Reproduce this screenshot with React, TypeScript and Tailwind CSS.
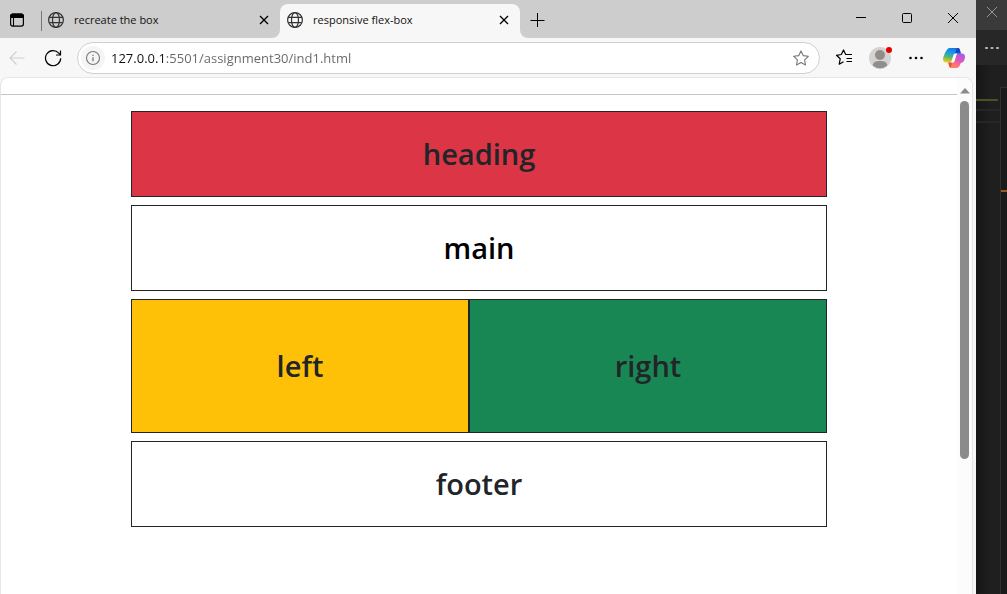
import type { ReactNode } from "react";

function Icon({ size = 16, className = "", children }: { size?: number; className?: string; children: ReactNode }) {
  return (
    <svg
      width={size}
      height={size}
      viewBox={`0 0 ${size} ${size}`}
      fill="none"
      stroke="currentColor"
      className={`shrink-0 ${className}`}
      aria-hidden="true"
    >
      {children}
    </svg>
  );
}

function Globe() {
  return (
    <Icon className="text-[#333333]">
      <circle cx="8" cy="8" r="7.4" strokeWidth="1.2" />
      <ellipse cx="8" cy="8" rx="3.5" ry="7.4" strokeWidth="1.2" />
      <path d="M1.3 5.3h13.4M1.3 10.7h13.4" strokeWidth="1.2" />
    </Icon>
  );
}

function TabFlare({ flipped = false }: { flipped?: boolean }) {
  return (
    <svg
      width="8"
      height="8"
      viewBox="0 0 8 8"
      className={`absolute bottom-0 text-[#f7f7f7] ${flipped ? "-right-2 -scale-x-100" : "-left-2"}`}
      aria-hidden="true"
    >
      <path d="M8 0v8H0a8 8 0 0 0 8-8z" fill="currentColor" />
    </svg>
  );
}

function Tab({ title, active = false }: { title: string; active?: boolean }) {
  return (
    <div
      className={`relative flex h-[34px] items-center pr-2 pb-[2px] pl-[7px] ${active ? "w-60 rounded-t-lg bg-[#f7f7f7]" : "w-[239px]"}`}
    >
      {active && <TabFlare />}
      {active && <TabFlare flipped />}
      <button type="button" className="flex min-w-0 grow items-center gap-[10px] text-left">
        <Globe />
        <span className="truncate text-[11px] text-[#111111]">{title}</span>
      </button>
      <button type="button" aria-label={`Close ${title}`} className="flex size-4 items-center justify-center text-black">
        <Icon size={10}>
          <path d="M1 1l8 8M9 1l-8 8" strokeWidth="1.3" />
        </Icon>
      </button>
    </div>
  );
}

function TabStrip() {
  return (
    <header className="flex h-[38px] items-end bg-[#cdcdcd] text-black">
      <button type="button" aria-label="Tab actions" className="flex h-[34px] w-[41px] items-center pb-[2px] pl-[9px]">
        <Icon>
          <rect x="1.6" y="2.1" width="12.8" height="12" rx="2" strokeWidth="1.2" />
          <path d="M1.6 5.5V4a2 2 0 0 1 2-2h8.8a2 2 0 0 1 2 2v1.5z" fill="currentColor" />
          <path d="M4.5 5v9" strokeWidth="1.1" />
        </Icon>
      </button>
      <div className="flex h-[34px] items-center">
        <span className="-mr-px h-5 w-px bg-[#777777]" />
      </div>
      <Tab title="recreate the box" />
      <Tab title="responsive flex-box" active />
      <button
        type="button"
        aria-label="New tab"
        className="flex h-[34px] w-[34px] items-center justify-center pb-[3px]"
      >
        <Icon>
          <path d="M8.5 1v14M1.5 8.5h14" />
        </Icon>
      </button>
      <div className="ml-auto flex h-9 self-start">
        <button type="button" aria-label="Minimize" className="flex w-[46px] items-center justify-center">
          <Icon size={12}>
            <path d="M1 5.5h10" />
          </Icon>
        </button>
        <button type="button" aria-label="Maximize" className="flex w-[46px] items-center justify-center">
          <Icon size={10}>
            <rect x="0.5" y="0.5" width="9" height="9" rx="1" />
          </Icon>
        </button>
        <button type="button" aria-label="Close" className="flex w-[46px] items-center justify-center">
          <Icon size={12}>
            <path d="M1 1l10 10M11 1L1 11" />
          </Icon>
        </button>
      </div>
    </header>
  );
}

function Copilot() {
  return (
    <svg width="22" height="20" viewBox="0 0 22 20" aria-hidden="true">
      <defs>
        <linearGradient id="blue" x1="0.6" y1="0" x2="0.4" y2="1">
          <stop offset="0" stopColor="#1674e0" />
          <stop offset="0.35" stopColor="#189cea" />
          <stop offset="0.65" stopColor="#56b86a" />
          <stop offset="1" stopColor="#f3c91c" />
        </linearGradient>
        <linearGradient id="pink" x1="0.8" y1="0" x2="0.3" y2="1">
          <stop offset="0" stopColor="#a35af0" />
          <stop offset="0.45" stopColor="#dd58b8" />
          <stop offset="0.75" stopColor="#fa7184" />
          <stop offset="1" stopColor="#fb8a45" />
        </linearGradient>
      </defs>
      <path
        d="M14 5.5h5c2 0 3 1.300 3 3.200 0 2-1.100 6.300-4.200 6.300l-1 2.200c-.7 1.700-1.600 2.800-3.400 2.800H8.600c-1.500 0-2.100-1.300-2.500-2.800L5.300 14.500h3.500c1.500 0 2.200-.8 2.700-2.300l1.300-4.600c.3-1.200.6-1.800 1.200-2.100z"
        fill="url(#pink)"
      />
      <path
        d="M8 14.500H3C1 14.500 0 13.200 0 11.300 0 9.500 1.200 6.500 2.200 4.500L4 1.800C4.800.6 5.600 0 7 0h7.500c1.500 0 2.200 1.300 2.500 2.800l.8 2.700h-4.300c-1.400 0-2 .8-2.400 2.200L9.600 12.500c-.4 1.300-.8 1.900-1.600 2z"
        fill="url(#blue)"
      />
      <path d="M12 5.800C13 2.500 13.200 0 15 0c1.400 0 1.900 1.400 2.200 2.800l.7 2.700h-4.200z" fill="#1748c2" />
      <path d="M9.300 13.500C8.600 16.500 8.200 20 7.200 19.800c-.8-.5-1.200-2.200-1.500-3.400l-.5-1.900H8z" fill="#ee5135" />
      <path
        d="M14.300 5.600h-1.600c-1.500 0-2.100.9-2.500 2.100L8.700 12.500c-.3 1-.6 1.700-1.300 2h1.700c1.600 0 2.300-.8 2.700-2.100l1.500-4.900c.3-1 .5-1.600 1-1.900z"
        fill="#ffffff"
      />
    </svg>
  );
}

function Toolbar() {
  return (
    <nav className="flex h-10 items-center bg-[#f7f7f7] text-black" aria-label="Browser toolbar">
      <button type="button" aria-label="Back" disabled className="flex w-[34px] justify-center text-[#cfcfcf]">
        <Icon>
          <path d="M15.5 8H1M7.5 1.500L1 8l6.500 6.500" strokeWidth="1.2" />
        </Icon>
      </button>
      <button type="button" aria-label="Refresh" className="flex w-[38px] justify-center">
        <Icon size={18}>
          <path d="M16.7 9.300A7.600 7.600 0 1 1 14.800 4.100L16.500 6" strokeWidth="1.2" />
          <path d="M16.5 1.500v4.500h-4.500" strokeWidth="1.2" />
        </Icon>
      </button>
      <div className="ml-[5px] flex h-8 grow items-center rounded-full border border-[#d0d0d0] bg-white pr-[10px] pl-[3px]">
        <button
          type="button"
          aria-label="Site information"
          className="flex size-6 items-center justify-center rounded-full bg-[#f5f5f5] text-[#777777]"
        >
          <Icon>
            <circle cx="8" cy="8" r="6.5" strokeWidth="1.1" />
            <path d="M8 7.200v4M8 4.700v1.300" strokeWidth="1.3" />
          </Icon>
        </button>
        <input
          type="text"
          aria-label="Address"
          defaultValue="127.0.0.1:5501/assignment30/ind1.html"
          className="ml-[6px] min-w-0 grow bg-[linear-gradient(to_right,#111111_54px,#666666_54px)] bg-clip-text pt-[2px] text-[13px] text-transparent caret-black outline-none"
        />
        <button type="button" aria-label="Add to favorites" className="text-[#777777]">
          <Icon>
            <path
              d="M8 .9l2.200 4.700 5.100.7-3.700 3.600.9 5.100L8 12.600 3.500 15l.9-5.100L.7 6.300l5.100-.7z"
              strokeWidth="1.1"
              strokeLinejoin="round"
            />
          </Icon>
        </button>
      </div>
      <div className="flex shrink-0 items-center pr-[2px] pl-[6px]">
        <button type="button" aria-label="Favorites" className="flex w-9 justify-center">
          <Icon size={18}>
            <path
              d="M8.500 12.700L4.200 15.200l1-5.400L1.500 6.300l4.800-.8L8.500 1l2.200 4.500h6.300M11.500 9.500h5.500M11.500 12.500h5.500"
              strokeWidth="1.2"
              strokeLinejoin="round"
            />
          </Icon>
        </button>
        <button type="button" aria-label="Profile" className="relative flex w-9 justify-center">
          <svg width="22" height="22" viewBox="0 0 22 22" aria-hidden="true">
            <circle cx="11" cy="11" r="11" fill="#d4d3d1" />
            <circle cx="11" cy="8" r="5" fill="#918d8a" />
            <path d="M3.800 18.500C4 14.800 7 14 11 14s7 .8 7.200 4.500A11 11 0 0 1 3.800 18.500z" fill="#918d8a" />
          </svg>
          <span className="absolute top-0 right-[6px] size-[6px] rounded-full bg-[#e30000]" />
        </button>
        <button type="button" aria-label="Settings and more" className="flex w-9 justify-center">
          <Icon>
            <g fill="currentColor" stroke="none">
              <circle cx="2.5" cy="8" r="1.300" />
              <circle cx="8" cy="8" r="1.300" />
              <circle cx="13.5" cy="8" r="1.300" />
            </g>
          </Icon>
        </button>
        <button type="button" aria-label="Copilot" className="flex w-10 justify-center">
          <Copilot />
        </button>
      </div>
    </nav>
  );
}

function Box({ className, children }: { className: string; children: ReactNode }) {
  return (
    <div className={`flex items-center justify-center border border-[#212529] ${className}`}>
      <h2 className="text-[29px] leading-9 font-[550]">{children}</h2>
    </div>
  );
}

function Page() {
  return (
    <div className="grow pt-4">
      <hr className="border-[#c4c4c4]" />
      <main className="mx-[130px] mt-4 flex flex-col gap-2 text-[#212529]">
        <Box className="bg-[#dc3545] py-6">heading</Box>
        <Box className="py-6 text-black">main</Box>
        <div className="grid grid-cols-[338fr_358fr]">
          <Box className="bg-[#ffc107] py-12">left</Box>
          <Box className="bg-[#198754] py-12">right</Box>
        </div>
        <Box className="py-6">footer</Box>
      </main>
    </div>
  );
}

function ScrollBar() {
  return (
    <div className="flex w-[15px] shrink-0 flex-col items-center rounded-tr-lg bg-[#fcfcfc] pt-[10px]" aria-hidden="true">
      <svg width="10" height="6" viewBox="0 0 10 6">
        <path d="M5 0l5 5.500H0z" fill="#8b8b8b" />
      </svg>
      <span className="mt-[7px] h-[358px] w-[9px] rounded-full bg-[#8b8b8b]" />
    </div>
  );
}

function EditorEdge() {
  return (
    <aside className="flex w-[31px] shrink-0 flex-col bg-linear-to-r from-[#161616] to-[#1f1f1f] to-50%">
      <div className="flex h-[30px] items-center justify-center bg-[#3a3a3a] pb-[6px] text-[#a0a0a0]">
        <button type="button" aria-label="Close editor">
          <Icon size={12} className="block">
            <path d="M1 1l10 10M11 1L1 11" strokeWidth="0.9" />
          </Icon>
        </button>
      </div>
      <div className="flex h-[35px] items-center justify-center bg-[#272727] text-[#bdbdbd]">
        <button type="button" aria-label="More actions">
          <Icon>
            <g fill="currentColor" stroke="none">
              <rect x="1" y="7" width="3" height="2" rx="1" />
              <rect x="6.5" y="7" width="3" height="2" rx="1" />
              <rect x="12" y="7" width="3" height="2" rx="1" />
            </g>
          </Icon>
        </button>
      </div>
      <div className="flex grow justify-end pt-[22px]">
        <div className="flex grow flex-col pt-3">
          <span className="h-[2px] w-[22px] bg-[#4e5024]" />
          <span className="mt-2 h-[14px] border-y-2 border-[#262626]" />
        </div>
        <div className="w-[7px] border-t border-l border-[#303030] bg-[#1a1a1a] pt-[102px]">
          <span className="block h-[2px] bg-[#9c5a1c]" />
        </div>
      </div>
    </aside>
  );
}

export default function App() {
  return (
    <div className="flex min-h-screen bg-[#1e1e1e] font-['Open_Sans','Noto_Sans',sans-serif]">
      <div className="flex min-w-0 grow flex-col bg-[#f7f7f7]">
        <TabStrip />
        <Toolbar />
        <div className="mr-[3px] -mt-px flex grow rounded-t-lg border-x border-t border-[#e6e6e6] bg-white">
          <Page />
          <ScrollBar />
        </div>
      </div>
      <EditorEdge />
    </div>
  );
}
